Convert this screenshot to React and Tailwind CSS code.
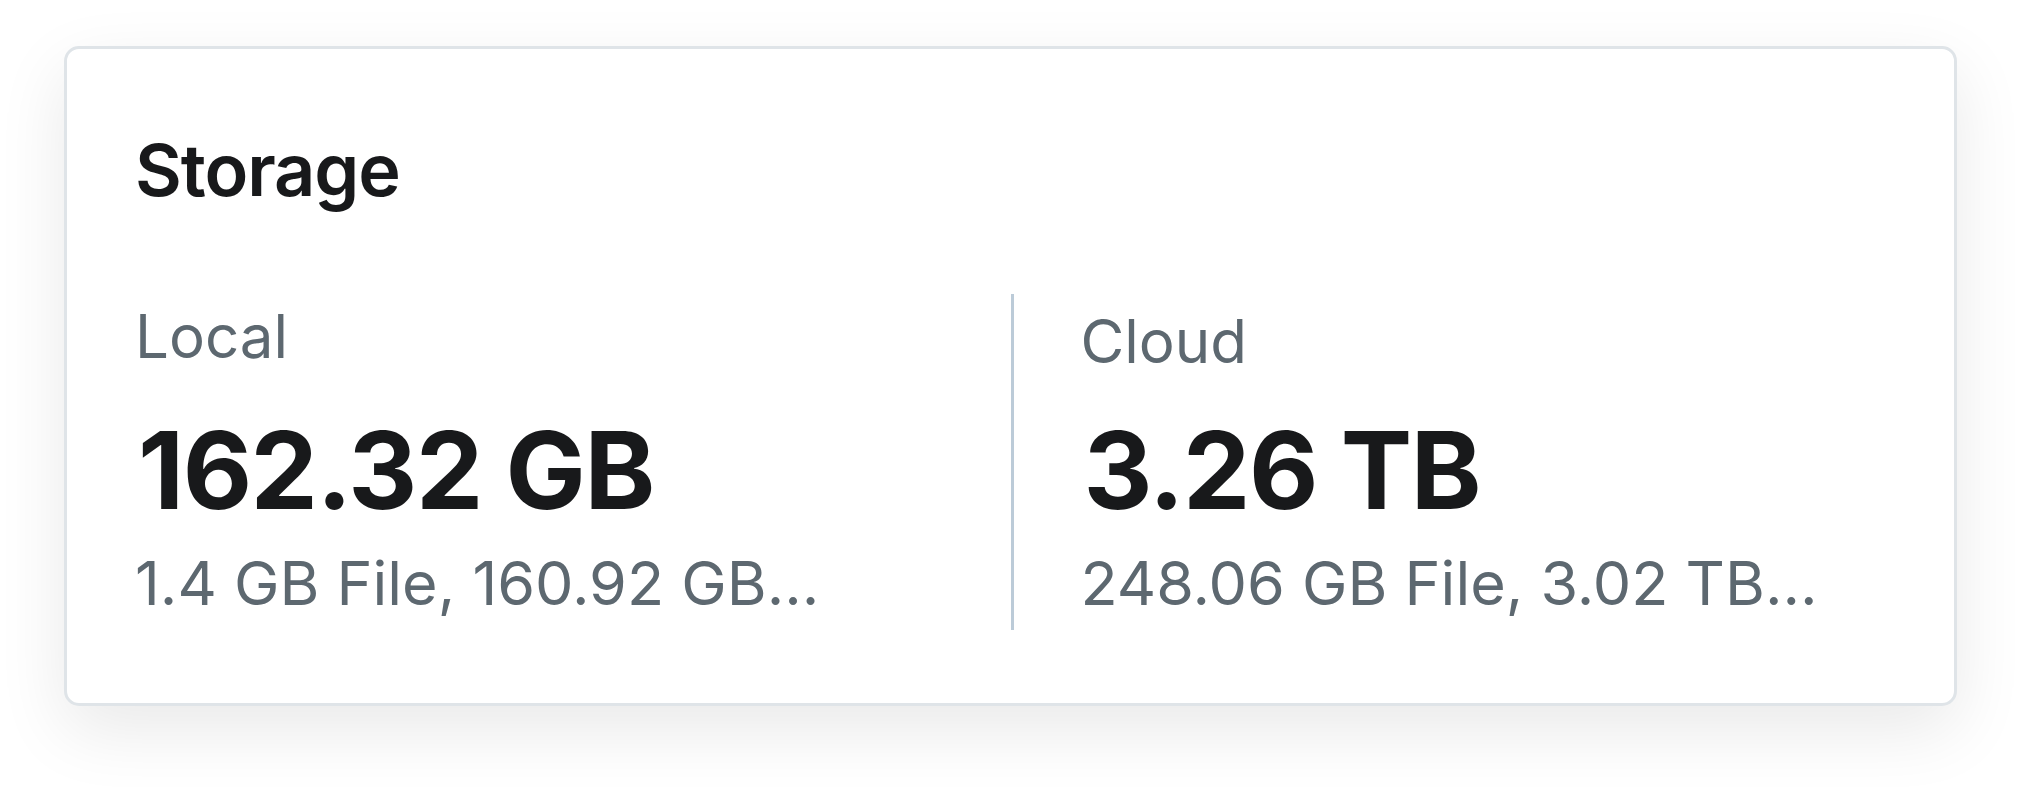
import React from 'react'

const stats = [
  { label: 'Local', value: '162.32 GB', detail: '1.4 GB File, 160.92 GB...' },
  { label: 'Cloud', value: '3.26 TB', detail: '248.06 GB File, 3.02 TB...' },
]

const StatColumn = ({ label, value, detail, first }) => (
  <div className={first ? 'pt-[12px] pb-[16px]' : 'pt-[12px] pb-[16px] pl-[67px] border-l-[3px] border-[#bccbd8]'}>
    <div className={`text-[60px] leading-none font-normal text-[#5d6870] ${first ? '' : 'mt-[5px] -mb-[5px]'}`}>{label}</div>
    <div className="mt-[51px] ml-[3px] text-[107px] leading-none font-bold text-[#18191b] tracking-[-0.014em]">{value}</div>
    <div className="mt-[29px] text-[61px] leading-none font-normal text-[#5d6870] whitespace-nowrap">{detail}</div>
  </div>
)

export default function App() {
  return (
    <div className="min-h-[787px] bg-white pt-[46px] pl-[64px] font-['Inter','Noto_Sans',sans-serif]">
      <div className="w-[1893px] h-[660px] bg-white border-[3px] border-[#dfe4e8] rounded-[15px] shadow-[0_24px_70px_rgba(0,0,0,0.09)] px-[68px] pt-[85px]">
        <h2 className="text-[72px] leading-none font-semibold text-[#18191b] tracking-[-0.015em]">Storage</h2>
        <div className="mt-[88px] grid grid-cols-2">
          {stats.map((s, i) => (
            <StatColumn key={s.label} {...s} first={i === 0} />
          ))}
        </div>
      </div>
    </div>
  )
}
